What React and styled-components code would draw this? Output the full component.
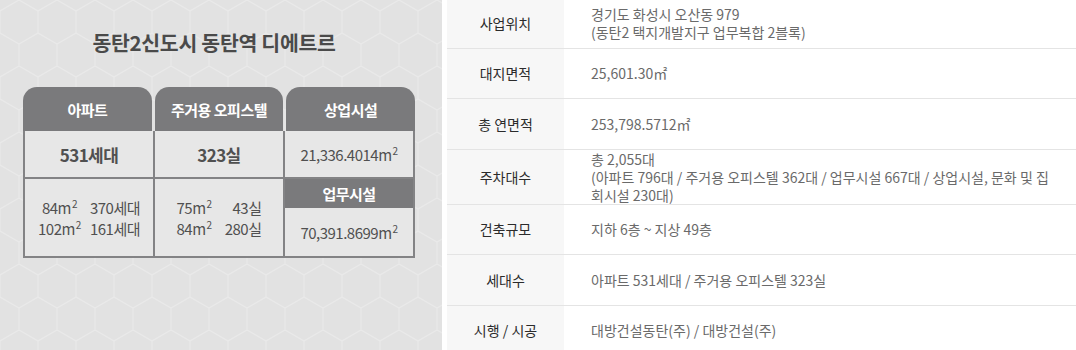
import React from "react";
import styled, { createGlobalStyle } from "styled-components";

const hexTile = encodeURIComponent(
  "<svg xmlns='http://www.w3.org/2000/svg' width='38' height='66'><path d='M0 11L19 0L38 11M0 11V33M38 11V33M0 33L19 44L38 33M19 44V66' fill='none' stroke='#ffffff' stroke-opacity='0.25' stroke-width='1.2'/></svg>"
);

const GlobalStyle = createGlobalStyle`
  html, body {
    margin: 0;
    padding: 0;
    background: #fff;
  }
  body {
    width: 1076px;
    height: 350px;
    overflow: hidden;
    font-family: "Noto Sans CJK KR", "Noto Sans", sans-serif;
  }
`;

const Page = styled.div`
  display: flex;
  gap: 5px;
  height: 350px;
`;

/* ---------- left : summary card ---------- */

const Panel = styled.section`
  width: 442px;
  flex: none;
  height: 350px;
  box-sizing: border-box;
  padding: 29px 0 0 23px;
  background: #e2e2e2 url("data:image/svg+xml,${hexTile}");
`;

const Title = styled.h2`
  margin: 0 0 31px;
  width: 382px;
  text-align: center;
  font-size: 20.5px;
  line-height: 27px;
  font-weight: 700;
  letter-spacing: -0.3px;
  color: #4a4a4a;
`;

const Heads = styled.div`
  display: grid;
  grid-template-columns: repeat(3, 1fr);
  gap: 3px;
  width: 392px;
`;

const Head = styled.div`
  height: ${(p) => p.$h || 44}px;
  display: flex;
  align-items: center;
  justify-content: center;
  background: #7a7a7c;
  border-radius: ${(p) => (p.$flat ? "0" : "14px 14px 0 0")};
  color: #fff;
  font-size: 15px;
  font-weight: 700;
  letter-spacing: -0.5px;
`;

const Body = styled.div`
  display: grid;
  grid-template-columns: repeat(3, 1fr);
  grid-template-rows: 46px 77px;
  gap: 2px;
  width: 392px;
  box-sizing: border-box;
  padding: 0 2px 2px;
  background: #838385;
`;

const Cell = styled.div`
  display: flex;
  flex-direction: column;
  align-items: center;
  justify-content: center;
  background: #e7e7e7;
  color: #505050;
  font-size: ${(p) => (p.$big ? 17 : 15)}px;
  font-weight: ${(p) => (p.$big ? 700 : 400)};
  letter-spacing: ${(p) => (p.$big ? "-0.6px" : "-0.5px")};
`;

const Stack = styled.div`
  display: flex;
  flex-direction: column;
  background: #e7e7e7;
`;

const SizeGrid = styled.div`
  display: grid;
  grid-template-columns: auto auto;
  column-gap: ${(p) => p.$gap}px;
  line-height: 21px;
  & > span:nth-child(odd) {
    justify-self: ${(p) => p.$first};
  }
  & > span:nth-child(even) {
    justify-self: ${(p) => p.$second};
  }
`;

const Sup = styled.sup`
  font-size: 10px;
  line-height: 0;
  margin-left: 1px;
`;

const M2 = () => (
  <>
    m<Sup>2</Sup>
  </>
);

/* ---------- right : overview table ---------- */

const Overview = styled.div`
  flex: 1;
  margin-top: -2px;
`;

const Row = styled.div`
  display: grid;
  grid-template-columns: 117px 1fr;
  min-height: 50.5px;
  box-sizing: border-box;
  border-bottom: 1px solid #e4e4e4;
`;

const Label = styled.div`
  display: flex;
  align-items: center;
  justify-content: center;
  background: #f7f7f7;
  color: #2b2b2b;
  font-size: 14px;
`;

const Value = styled.div`
  display: flex;
  align-items: center;
  padding-left: 27px;
  color: #6a6a6a;
  font-size: 14px;
  line-height: 18px;
  white-space: nowrap;
`;

const rows = [
  ["사업위치", ["경기도 화성시 오산동 979", "(동탄2 택지개발지구 업무복합 2블록)"]],
  ["대지면적", ["25,601.30㎡"]],
  ["총 연면적", ["253,798.5712㎡"]],
  [
    "주차대수",
    [
      "총 2,055대",
      "(아파트 796대 / 주거용 오피스텔 362대 / 업무시설 667대 / 상업시설, 문화 및 집",
      "회시설 230대)",
    ],
  ],
  ["건축규모", ["지하 6층 ~ 지상 49층"]],
  ["세대수", ["아파트 531세대 / 주거용 오피스텔 323실"]],
  ["시행 / 시공", ["대방건설동탄(주) / 대방건설(주)"]],
];

export default function App() {
  return (
    <Page>
      <GlobalStyle />
      <Panel>
        <Title>동탄2신도시 동탄역 디에트르</Title>
        <Heads>
          <Head>아파트</Head>
          <Head>주거용 오피스텔</Head>
          <Head>상업시설</Head>
        </Heads>
        <Body>
          <Cell $big>531세대</Cell>
          <Cell $big>323실</Cell>
          <Cell>
            <span>
              21,336.4014<M2 />
            </span>
          </Cell>
          <Cell>
            <SizeGrid $gap={9} $first="center" $second="start">
              <span>
                84<M2 />
              </span>
              <span>370세대</span>
              <span>
                102<M2 />
              </span>
              <span>161세대</span>
            </SizeGrid>
          </Cell>
          <Cell>
            <SizeGrid $gap={13} $first="start" $second="end">
              <span>
                75<M2 />
              </span>
              <span>43실</span>
              <span>
                84<M2 />
              </span>
              <span>280실</span>
            </SizeGrid>
          </Cell>
          <Stack>
            <Head $flat $h={29}>
              업무시설
            </Head>
            <Cell style={{ flex: 1 }}>
              <span>
                70,391.8699<M2 />
              </span>
            </Cell>
          </Stack>
        </Body>
      </Panel>

      <Overview>
        {rows.map(([label, lines]) => (
          <Row key={label}>
            <Label>{label}</Label>
            <Value>
              <div>
                {lines.map((line, i) => (
                  <div key={i}>{line}</div>
                ))}
              </div>
            </Value>
          </Row>
        ))}
      </Overview>
    </Page>
  );
}
